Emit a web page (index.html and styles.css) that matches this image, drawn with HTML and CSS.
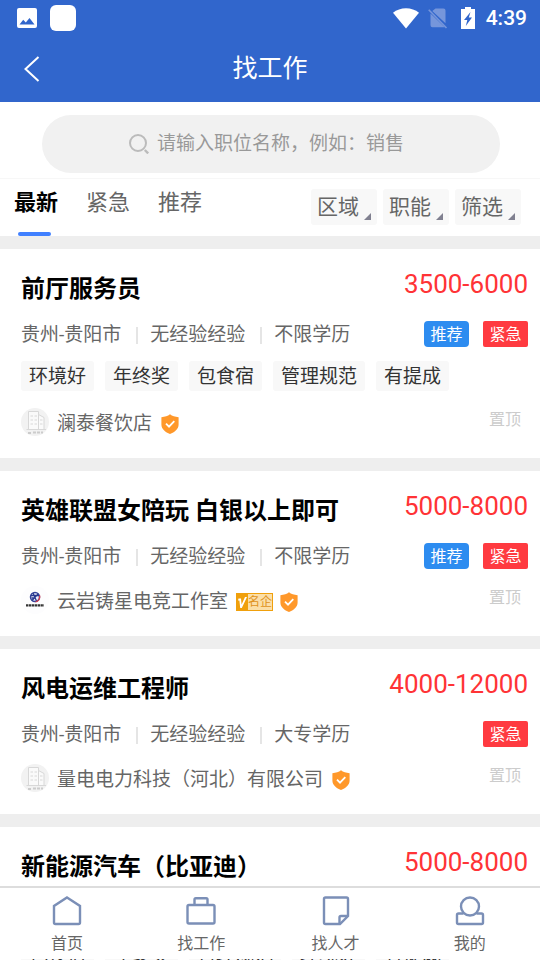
FILE: index.html
```html
<!DOCTYPE html>
<html lang="zh-CN">
<head>
<meta charset="utf-8">
<meta name="viewport" content="width=device-width, initial-scale=1">
<title>找工作</title>
<link rel="stylesheet" href="styles.css">
</head>
<body>
<svg class="defs" aria-hidden="true">
  <symbol id="shield" viewBox="0 0 18 20">
    <path d="M9 0.3C11.2 2 14 3 17.6 3.2V10.500C17.600 15 13.500 18.300 9 20C4.500 18.300 0.400 15 0.400 10.500V3.200C4 3 6.800 2 9 0.300Z" fill="#ff982a"/>
    <path d="M5 9.600L8 12.600L13.300 7.200" fill="none" stroke="#fff" stroke-width="1.800"/>
  </symbol>
  <symbol id="building" viewBox="0 0 28 28">
    <circle cx="14" cy="14" r="14" fill="#f2f2f2"/>
    <g fill="#fafafa" stroke="#d8d8d8" stroke-width="1">
      <path d="M7.500 21.500V3.500H17.500V21.500Z"/>
      <path d="M17.500 6.500L23 9.500V21.500H17.500Z"/>
      <path d="M5.500 21.500H25"/>
      <path d="M9.500 8H12M13.500 8H16M9.500 12H12M13.500 12H16M9.500 16H12M13.500 16H16M19 12H21.500M19 16H21.500"/>
    </g>
    <path d="M7 25H10M12 24.500H22" stroke="#ccc" stroke-width="1.800" stroke-dasharray="3 1"/>
  </symbol>
</svg>

<div class="app">
  <header class="header">
    <div class="status">
      <svg class="ic-photo" viewBox="0 0 20 20"><path fill-rule="evenodd" fill="#fff" d="M2 0H18Q20 0 20 2V18Q20 20 18 20H2Q0 20 0 18V2Q0 0 2 0ZM2.500 16.500H17.500L12.500 10L8.800 14.500L6.200 11.800Z"/></svg>
      <span class="blank-icon"></span>
      <svg class="ic-wifi" viewBox="0 0 26 21"><path fill="#fff" d="M13 20.500L0 4.800C7-1.300 19-1.300 26 4.800Z"/></svg>
      <svg class="ic-sim" viewBox="0 0 20 21"><path fill="#7696db" d="M7.500 0.500H15.500Q17.500 0.500 17.500 2.500V15.300L4.300 2.900ZM2.500 5.500L16.800 19.300H4.500Q2.500 19.300 2.500 17.300Z"/><path d="M0.700 1.700L18.500 20" stroke="#7696db" stroke-width="1.600"/></svg>
      <svg class="ic-battery" viewBox="0 0 14 22"><path fill="#fff" fill-rule="evenodd" d="M4 0H10V2H14V22H0V2H4ZM9.500 5L3 13H6.300L4.800 19L11 10.500H7.800Z"/></svg>
      <time class="clock">4:39</time>
    </div>
    <div class="titlebar">
      <button class="back" type="button" aria-label="返回"><svg viewBox="0 0 16 26"><path d="M14.500 1L1.500 13L14.500 25" fill="none" stroke="#fff" stroke-width="2"/></svg></button>
      <h1>找工作</h1>
    </div>
  </header>

  <form class="search">
    <label class="pill">
      <svg viewBox="0 0 20 20"><circle cx="9" cy="9" r="8" fill="none" stroke="#bbb" stroke-width="2"/><path d="M15.800 16L19.200 19.400" stroke="#bbb" stroke-width="2.400"/></svg>
      <input type="text" aria-label="搜索职位" placeholder="请输入职位名称，例如：销售">
    </label>
  </form>

  <div class="filters">
    <nav class="tabs">
      <a class="active" href="#new">最新</a>
      <a href="#urgent">紧急</a>
      <a href="#recommend">推荐</a>
    </nav>
    <div class="drops">
      <button type="button">区域</button>
      <button type="button">职能</button>
      <button type="button">筛选</button>
    </div>
  </div>

  <main class="list">
    <article class="card">
      <div class="head"><h2>前厅服务员</h2><span class="salary">3500-6000</span></div>
      <div class="meta"><span>贵州-贵阳市</span><span>无经验经验</span><span>不限学历</span><div class="badges"><b class="rec">推荐</b><b class="urgent">紧急</b></div></div>
      <ul class="tags"><li>环境好</li><li>年终奖</li><li>包食宿</li><li>管理规范</li><li>有提成</li></ul>
      <div class="company"><svg class="avatar"><use href="#building"/></svg><span>澜泰餐饮店</span><svg class="shield"><use href="#shield"/></svg><em>置顶</em></div>
    </article>

    <article class="card">
      <div class="head"><h2>英雄联盟女陪玩 白银以上即可</h2><span class="salary">5000-8000</span></div>
      <div class="meta"><span>贵州-贵阳市</span><span>无经验经验</span><span>不限学历</span><div class="badges"><b class="rec">推荐</b><b class="urgent">紧急</b></div></div>
      <div class="company">
        <svg class="avatar" viewBox="0 0 28 28">
          <circle cx="14" cy="14" r="14" fill="#fdfdfe"/>
          <circle cx="14" cy="11" r="4.500" fill="#eef0fa" stroke="#34439a" stroke-width="1.500"/>
          <path d="M10 9.500H18M12 7L15.500 15M17 8L11 14.500M10.500 12H14" stroke="#283990" stroke-width="1.300"/>
          <path d="M18.700 9.500Q19.200 14.500 14.500 16" fill="none" stroke="#d43b4d" stroke-width="1.300"/>
          <path d="M5 19.300H23" stroke="#333" stroke-width="2.200" stroke-dasharray="2.400 0.500"/>
        </svg>
        <span>云岩铸星电竞工作室</span>
        <strong class="famous"><svg viewBox="0 0 12 18"><path d="M2.500 5.500H5L5.600 11.500L9 4H11L5.800 15H4.200L3.400 7.500H2Z" fill="#fff"/></svg><i>名企</i></strong>
        <svg class="shield"><use href="#shield"/></svg><em>置顶</em>
      </div>
    </article>

    <article class="card">
      <div class="head"><h2>风电运维工程师</h2><span class="salary">4000-12000</span></div>
      <div class="meta"><span>贵州-贵阳市</span><span>无经验经验</span><span>大专学历</span><div class="badges"><b class="urgent">紧急</b></div></div>
      <div class="company"><svg class="avatar"><use href="#building"/></svg><span>量电电力科技（河北）有限公司</span><svg class="shield"><use href="#shield"/></svg><em>置顶</em></div>
    </article>

    <article class="card">
      <div class="head"><h2>新能源汽车（比亚迪）</h2><span class="salary">5000-8000</span></div>
      <div class="meta"><span>贵州-贵阳市</span><span>无经验经验</span><span>不限学历</span></div>
      <ul class="tags"><li>包食宿</li><li>年终奖</li><li>管理规范</li><li>环境好</li><li>有提成</li></ul>
    </article>
  </main>

  <nav class="tabbar">
    <a href="#home"><svg viewBox="0 0 30 30"><path d="M15 1.500L28 10V26.500Q28 28 26.500 28H3.500Q2 28 2 26.500V10Z"/></svg>首页</a>
    <a href="#jobs"><svg viewBox="0 0 30 30"><rect x="1.500" y="9" width="27" height="18.500" rx="1.500"/><path d="M8.500 9V3.500Q8.500 2.200 9.800 2.200H20.200Q21.500 2.200 21.500 3.500V9"/></svg>找工作</a>
    <a href="#talent"><svg viewBox="0 0 30 30"><path d="M4.500 1.500H25.500Q27 1.500 27 3V20L19 28H4.500Q3 28 3 26.500V3Q3 1.500 4.500 1.500Z"/><path d="M18.500 28V21.500Q18.500 20 20 20H27"/></svg>找人才</a>
    <a href="#me"><svg viewBox="0 0 30 30"><circle cx="15" cy="10.500" r="9"/><path d="M8.500 17.500H3.500Q2 17.500 2 19V26.500Q2 28 3.500 28H26.500Q28 28 28 26.500V19Q28 17.500 26.500 17.500H21.500"/></svg>我的</a>
  </nav>
</div>
</body>
</html>
```
FILE: styles.css
```css
* { box-sizing: border-box; margin: 0; padding: 0; }
body { font-family: Roboto, "Noto Sans CJK SC", sans-serif; background: #fff; color: #666; }
button, input { font: inherit; color: inherit; border: 0; background: none; }
a { color: inherit; text-decoration: none; }
svg { display: block; flex: none; }
.defs { display: none; }

.app { position: relative; display: flex; flex-direction: column; height: 100vh; overflow: hidden; }

.header { flex: none; background: #3166cc; color: #fff; }
.status { display: flex; align-items: center; height: 36px; padding: 0 13px 0 17px; }
.ic-photo { width: 20px; height: 20px; }
.blank-icon { width: 26px; height: 26px; margin: 0 auto 0 13px; border-radius: 6px; background: #fff; }
.ic-wifi { width: 26px; height: 21px; }
.ic-sim { width: 20px; height: 21px; margin-left: 9px; }
.ic-battery { width: 14px; height: 22px; margin: 0 11px 0 13px; }
.clock { font-size: 21px; font-weight: 500; line-height: 38px; }
.titlebar { display: grid; grid-template-columns: 60px 1fr 60px; align-items: center; height: 66px; }
.back { display: flex; height: 44px; align-items: center; padding-left: 24px; }
.back svg { width: 16px; height: 26px; }
.titlebar h1 { font-size: 25px; font-weight: 400; line-height: 60px; text-align: center; }

.search { flex: none; padding: 13px 40px 5px 42px; border-bottom: 1px solid #f7f7f7; }
.pill { display: flex; justify-content: center; align-items: center; gap: 8px; height: 58px; border-radius: 29px; background: #f1f1f1; }
.pill svg { width: 20px; height: 20px; }
.pill input { width: 256px; height: 54px; padding-bottom: 2px; font-size: 19px; outline: 0; }
.pill input::placeholder { color: #999; opacity: 1; }

.filters { flex: none; display: flex; justify-content: space-between; height: 57px; padding: 0 19px 0 14px; }
.tabs { display: flex; gap: 28px; font-size: 22px; line-height: 48px; }
.tabs a { position: relative; }
.tabs .active { color: #000; font-weight: 700; }
.tabs .active::after { content: ""; position: absolute; left: 4px; right: 7px; bottom: 0; height: 4px; border-radius: 2px; background: #4080ff; }
.drops { display: flex; gap: 6px; padding-top: 10px; }
.drops button { position: relative; width: 66px; height: 36px; padding-left: 6px; border-radius: 3px; background: #f8f8f8; font-size: 21px; line-height: 34px; text-align: left; }
.drops button::after { content: ""; position: absolute; right: 6px; bottom: 5px; width: 7px; height: 7px; background: #808090; clip-path: polygon(100% 0, 100% 100%, 0 100%); }

.list { display: flow-root; flex: 1; min-height: 0; overflow: hidden; background: #eee; }
.card { margin-top: 13px; padding: 22px 12px 22px 21px; background: #fff; }
.head { display: flex; justify-content: space-between; align-items: flex-start; }
.head h2 { font-size: 24px; font-weight: 700; line-height: 36px; color: #000; }
.salary { font-size: 26px; line-height: 26px; color: #ff3336; }
.meta { display: flex; align-items: center; height: 26px; margin-top: 14px; font-size: 19px; line-height: 26px; }
.meta > span { padding-top: 2px; }
.meta > span + span { display: flex; align-items: center; }
.meta > span + span::before { content: ""; width: 2px; height: 17px; margin: 0 12px 0 15px; background: #e5e5e5; }
.badges { display: flex; gap: 14px; margin-left: auto; }
.badges b { min-width: 45px; height: 26px; border-radius: 4px; font-size: 16px; font-weight: 400; line-height: 28px; text-align: center; color: #fff; }
.rec { background: #2d8cf0; }
.badges .urgent { border-radius: 2px; background: #ff3a40; }
.tags { display: flex; gap: 11px; margin-top: 14px; list-style: none; }
.tags li { height: 30px; padding: 0 8px; border-radius: 3px; background: #f8f8f8; font-size: 19px; line-height: 31px; color: #333; }
.company { display: flex; align-items: center; height: 28px; margin-top: 17px; font-size: 19px; line-height: 28px; }
.company > span { padding-top: 3px; }
.avatar { width: 28px; height: 28px; margin-right: 8px; }
.shield { width: 18px; height: 20px; margin: 4px 0 0 9px; }
.company em { margin: 0 7px 5px auto; font-size: 16px; font-style: normal; line-height: 20px; color: #ccc; }
.famous { display: flex; align-items: center; height: 18px; margin: 4px 0 0 8px; padding-right: 1px; background: #f0a00c; }
.famous + .shield { margin-left: 7px; }
.famous svg { width: 12px; height: 18px; }
.famous i { height: 16px; background: #fbdfa8; color: #df921c; font-size: 12px; font-style: normal; font-weight: 400; line-height: 16px; }

.tabbar { position: absolute; left: 0; right: 0; bottom: 1px; display: grid; grid-template-columns: repeat(4, 1fr); height: 73px; padding-right: 3px; border-top: 2px solid #ddd; background: #fff; }
.tabbar a { display: flex; flex-direction: column; align-items: center; padding-top: 8px; font-size: 16px; line-height: 36px; }
.tabbar svg { width: 30px; height: 30px; fill: none; stroke: #7b8fb7; stroke-width: 2.400; }
```
